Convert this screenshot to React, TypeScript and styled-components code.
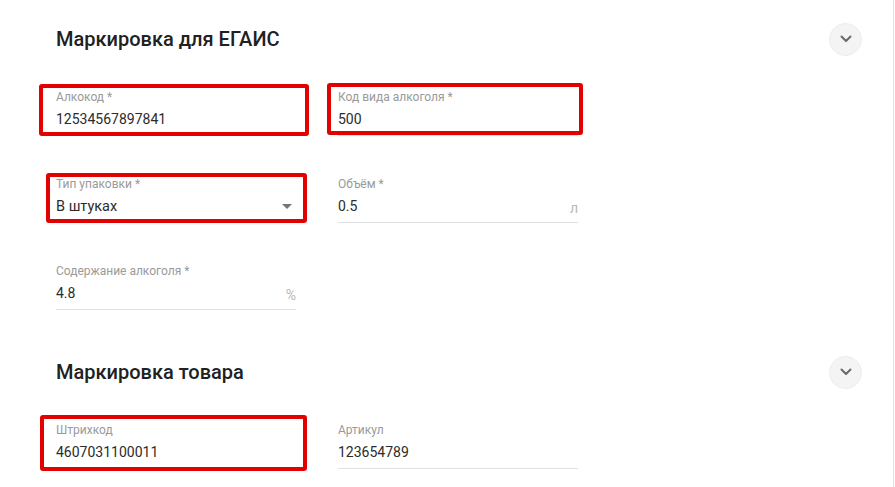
import React from "react";
import styled, { createGlobalStyle } from "styled-components";

const GlobalStyle = createGlobalStyle`
  body {
    margin: 0;
    background: #fff;
    font-family: Roboto, "Noto Sans", Arial, sans-serif;
  }
`;

const Page = styled.div`
  width: 895px;
  height: 487px;
  overflow: hidden;
  background: #fff;
`;

const Card = styled.div`
  width: 893px;
  min-height: 487px;
  border-right: 1px solid #e2e2e2;
`;

const Section = styled.section<{ $gapTop: number }>`
  padding: ${({ $gapTop }) => $gapTop}px 31px 0 56px;
`;

const Header = styled.div`
  display: flex;
  align-items: center;
  justify-content: space-between;
  height: 32px;
`;

const Title = styled.h2`
  margin: 0;
  font-size: 20px;
  font-weight: 500;
  color: #212121;
`;

const CollapseButton = styled.button`
  width: 33px;
  height: 33px;
  border-radius: 50%;
  border: 1px solid #ececec;
  background: #f4f4f4;
  padding: 0;
  display: flex;
  align-items: center;
  justify-content: center;
  cursor: pointer;
`;

const Grid = styled.div`
  display: grid;
  grid-template-columns: 240px 240px;
  column-gap: 42px;
  row-gap: 40px;
  margin-top: 34px;
`;

type Inset = { top: number; right: number; bottom: number; left: number };

const Field = styled.div<{ $mark?: Inset; $line?: boolean }>`
  position: relative;
  display: flex;
  flex-direction: column;
  padding-bottom: 6px;
  border-bottom: 1px solid ${({ $line }) => ($line === false ? "transparent" : "#e0e0e0")};

  ${({ $mark }) =>
    $mark &&
    `
    &::after {
      content: "";
      position: absolute;
      top: ${$mark.top}px;
      right: ${$mark.right}px;
      bottom: ${$mark.bottom}px;
      left: ${$mark.left}px;
      border: 4px solid #e30000;
      border-radius: 3px;
      pointer-events: none;
    }
  `}
`;

const Label = styled.label`
  font-size: 12px;
  line-height: 16px;
  color: #9a9a9a;
`;

const ValueRow = styled.div`
  display: flex;
  align-items: center;
  justify-content: space-between;
  margin-top: 4px;
  height: 20px;
`;

const Value = styled.span<{ $size?: number }>`
  font-size: ${({ $size }) => $size ?? 14}px;
  color: #2b2b2b;
`;

const Suffix = styled.span`
  font-size: 14px;
  color: #b8b8b8;
  margin-top: 4px;
`;

const Caret = styled.span`
  width: 0;
  height: 0;
  border-left: 5px solid transparent;
  border-right: 5px solid transparent;
  border-top: 5px solid #757575;
  margin-right: 4px;
`;

const Chevron = () => (
  <svg width="12" height="8" viewBox="0 0 12 8">
    <path d="M1.5 1.5 L6 6 L10.5 1.5" fill="none" stroke="#6a6a6a" strokeWidth="2" strokeLinecap="round" strokeLinejoin="round" />
  </svg>
);

type FieldDef = {
  label: string;
  value: string;
  suffix?: string;
  select?: boolean;
  mark?: Inset;
};

const egais: FieldDef[] = [
  { label: "Алкокод *", value: "12534567897841", mark: { top: -5, right: -13, bottom: -1, left: -17 } },
  { label: "Код вида алкоголя *", value: "500", mark: { top: -6, right: -5, bottom: 0, left: -11 } },
  { label: "Тип упаковки *", value: "В штуках", select: true, mark: { top: -3, right: -11, bottom: -1, left: -10 } },
  { label: "Объём *", value: "0.5", suffix: "л" },
  { label: "Содержание алкоголя *", value: "4.8", suffix: "%" },
];

const goods: FieldDef[] = [
  { label: "Штрихкод", value: "4607031100011", mark: { top: -7, right: -11, bottom: -3, left: -16 } },
  { label: "Артикул", value: "123654789" },
];

const FormField = ({ f }: { f: FieldDef }) => (
  <Field $mark={f.mark} $line={!f.select}>
    <Label>{f.label}</Label>
    <ValueRow>
      <Value $size={f.select ? 14.5 : 14}>{f.value}</Value>
      {f.suffix && <Suffix>{f.suffix}</Suffix>}
      {f.select && <Caret />}
    </ValueRow>
  </Field>
);

const FormSection = ({ title, fields, gapTop }: { title: string; fields: FieldDef[]; gapTop: number }) => (
  <Section $gapTop={gapTop}>
    <Header>
      <Title>{title}</Title>
      <CollapseButton aria-label="Свернуть">
        <Chevron />
      </CollapseButton>
    </Header>
    <Grid>
      {fields.map((f) => (
        <FormField key={f.label} f={f} />
      ))}
    </Grid>
  </Section>
);

export default function App() {
  return (
    <Page>
      <GlobalStyle />
      <Card>
        <FormSection title="Маркировка для ЕГАИС" fields={egais} gapTop={23} />
        <FormSection title="Маркировка товара" fields={goods} gapTop={46} />
      </Card>
    </Page>
  );
}
